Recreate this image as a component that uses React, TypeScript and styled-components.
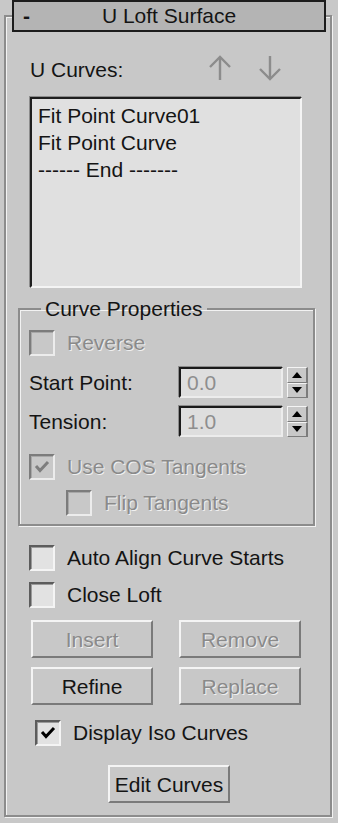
import styled, { createGlobalStyle } from 'styled-components';

// Rollout: Header < Body (UCurves, List, Group, options, buttons)

const GlobalStyle = createGlobalStyle`
  html, body {
    margin: 0;
    padding: 0;
    background: #c8c8c8;
  }
`;

const Page = styled.div`
  box-sizing: border-box;
  width: 338px;
  height: 823px;
  overflow: hidden;
  padding-top: 15px;
  background: #c8c8c8;
  color: #141414;
  font: 21px/25px 'Liberation Sans', Arial, sans-serif;
`;

const Rollout = styled.section`
  box-sizing: border-box;
  margin-left: 4px;
  width: 328px;
  height: 802px;
  border: 2px solid #8c8c8c;
  box-shadow: inset 1px 1px 0 #f2f2f2, 1px 1px 0 #f2f2f2;
  display: flex;
  flex-direction: column;
`;

const Header = styled.header`
  box-sizing: border-box;
  margin: -17px 4px 0 6px;
  height: 32px;
  border: 2px solid #1c1c1c;
  background: #b4b4b4;
  display: grid;
  grid-template-columns: 1fr auto 1fr;
  align-items: center;
  line-height: 28px;
`;

const Collapse = styled.span`
  padding-left: 9px;
  font-weight: bold;
`;

const Title = styled.span`
  text-align: center;
`;

const Body = styled.div`
  display: flex;
  flex-direction: column;
  padding: 0 15px 0 23px;
`;

const LabelRow = styled.div`
  display: flex;
  align-items: center;
  height: 25px;
  margin-top: 25px;
  padding-left: 1px;
`;

const Arrows = styled.div`
  display: flex;
  gap: 26px;
  margin: -3px 33px 0 auto;
`;

const List = styled.ul`
  box-sizing: border-box;
  list-style: none;
  margin: 15px 0 0 1px;
  padding: 3px 6px;
  width: 272px;
  height: 191px;
  border-style: solid;
  border-width: 2px;
  border-color: #1e1e1e #f4f4f4 #f4f4f4 #1e1e1e;
  box-shadow: -1px -1px 0 #8c8c8c;
  background: #e0e0e0;
  line-height: 27px;
`;

const Group = styled.fieldset`
  box-sizing: border-box;
  margin: 8px 0 0 -11px;
  padding: 8px 5px 0 9px;
  height: 230px;
  min-width: 0;
  border: 2px solid #8c8c8c;
  box-shadow: inset 1px 1px 0 #f2f2f2, 1px 1px 0 #f2f2f2;
  display: flex;
  flex-direction: column;
`;

const Legend = styled.legend`
  margin-left: 12px;
  padding: 0 4px;
  line-height: 25px;
`;

const Row = styled.div<{ $top?: number; $indent?: number }>`
  display: flex;
  align-items: center;
  margin-top: ${(p) => p.$top ?? 0}px;
  padding-left: ${(p) => p.$indent ?? 0}px;
`;

const Box = styled.span<{ $disabled?: boolean }>`
  box-sizing: border-box;
  flex: none;
  width: 26px;
  height: 26px;
  border-style: solid;
  border-width: 2px;
  border-color: ${(p) =>
    p.$disabled ? '#7c7c7c #ececec #ececec #7c7c7c' : '#5c5c5c #f4f4f4 #f4f4f4 #5c5c5c'};
  box-shadow: inset 1px 1px 0 ${(p) => (p.$disabled ? '#a8a8a8' : '#9a9a9a')};
  background: ${(p) => (p.$disabled ? '#c8c8c8' : '#e2e2e2')};
  display: flex;
  align-items: center;
  justify-content: center;
`;

const CheckText = styled.span<{ $disabled?: boolean }>`
  margin-left: 12px;
  line-height: 27px;
  color: ${(p) => (p.$disabled ? '#8a8a8a' : '#141414')};
  text-shadow: ${(p) => (p.$disabled ? '1px 1px 0 #f0f0f0' : 'none')};
`;

const FieldLabel = styled.span`
  flex: 1;
`;

const Field = styled.div`
  box-sizing: border-box;
  width: 104px;
  height: 31px;
  padding-left: 6px;
  border-style: solid;
  border-width: 2px;
  border-color: #1a1a1a #ececec #ececec #1a1a1a;
  box-shadow: -1px -1px 0 #8c8c8c;
  background: #dedede;
  color: #8e8e8e;
  line-height: 27px;
`;

const Spinner = styled.div`
  display: flex;
  flex-direction: column;
  width: 21px;
  height: 31px;
  margin-left: 4px;
`;

const SpinButton = styled.span`
  box-sizing: border-box;
  flex: 1;
  border-style: solid;
  border-width: 1px 2px 1px 1px;
  border-color: #f4f4f4 #7c7c7c #7c7c7c #f4f4f4;
  display: flex;
  align-items: center;
  justify-content: center;
`;

const ButtonRow = styled.div<{ $top: number }>`
  display: flex;
  gap: 26px;
  margin: ${(p) => p.$top}px 0 0 2px;
`;

const Button = styled.button<{ $offset?: number }>`
  box-sizing: border-box;
  width: 122px;
  height: 38px;
  margin-left: ${(p) => p.$offset ?? 0}px;
  padding: 0;
  border-style: solid;
  border-width: 2px;
  border-color: #f4f4f4 #7a7a7a #7a7a7a #f4f4f4;
  background: #c8c8c8;
  font: inherit;
  color: #141414;
  &:disabled {
    color: #8a8a8a;
    text-shadow: 1px 1px 0 #f0f0f0;
  }
`;

function Arrow({ down }: { down?: boolean }) {
  return (
    <svg width="24" height="26" viewBox="0 0 24 26">
      <g
        fill="none"
        stroke="#8c8c8c"
        strokeWidth="2.4"
        transform={down ? 'rotate(180 12 13)' : undefined}
      >
        <path d="M12 2 V25" />
        <path d="M2 12 L12 2 L22 12" />
      </g>
    </svg>
  );
}

function Check({ on, disabled }: { on?: boolean; disabled?: boolean }) {
  return (
    <Box $disabled={disabled}>
      {on && (
        <svg width="16" height="16" viewBox="0 0 16 16">
          <path
            d="M2 7 L6 11.5 L14 3"
            fill="none"
            stroke={disabled ? '#7e7e7e' : '#000'}
            strokeWidth="3"
          />
        </svg>
      )}
    </Box>
  );
}

function Option({
  label,
  on,
  disabled,
  top,
  indent,
}: {
  label: string;
  on?: boolean;
  disabled?: boolean;
  top?: number;
  indent?: number;
}) {
  return (
    <Row $top={top} $indent={indent}>
      <Check on={on} disabled={disabled} />
      <CheckText $disabled={disabled}>{label}</CheckText>
    </Row>
  );
}

function Spin() {
  return (
    <Spinner>
      <SpinButton>
        <svg width="10" height="6" viewBox="0 0 10 6">
          <path d="M0 6 L5 0 L10 6 Z" fill="#000" />
        </svg>
      </SpinButton>
      <SpinButton>
        <svg width="10" height="6" viewBox="0 0 10 6">
          <path d="M0 0 L10 0 L5 6 Z" fill="#000" />
        </svg>
      </SpinButton>
    </Spinner>
  );
}

const curves = ['Fit Point Curve01', 'Fit Point Curve', '------ End -------'];

function App() {
  return (
    <Page>
      <GlobalStyle />
      <Rollout>
        <Header>
          <Collapse>-</Collapse>
          <Title>U Loft Surface</Title>
          <span />
        </Header>
        <Body>
          <LabelRow>
            U Curves:
            <Arrows>
              <Arrow />
              <Arrow down />
            </Arrows>
          </LabelRow>
          <List>
            {curves.map((c) => (
              <li key={c}>{c}</li>
            ))}
          </List>
          <Group>
            <Legend>Curve Properties</Legend>
            <Option label="Reverse" disabled />
            <Row $top={11}>
              <FieldLabel>Start Point:</FieldLabel>
              <Field>0.0</Field>
              <Spin />
            </Row>
            <Row $top={8}>
              <FieldLabel>Tension:</FieldLabel>
              <Field>1.0</Field>
              <Spin />
            </Row>
            <Option label="Use COS Tangents" on disabled top={16} />
            <Option label="Flip Tangents" disabled top={9} indent={37} />
          </Group>
          <Option label="Auto Align Curve Starts" top={18} />
          <Option label="Close Loft" top={10} />
          <ButtonRow $top={12}>
            <Button disabled>Insert</Button>
            <Button disabled>Remove</Button>
          </ButtonRow>
          <ButtonRow $top={9}>
            <Button>Refine</Button>
            <Button disabled>Replace</Button>
          </ButtonRow>
          <Option label="Display Iso Curves" on top={14} indent={6} />
          <Row $top={19}>
            <Button $offset={79}>Edit Curves</Button>
          </Row>
        </Body>
      </Rollout>
    </Page>
  );
}

export default App;
